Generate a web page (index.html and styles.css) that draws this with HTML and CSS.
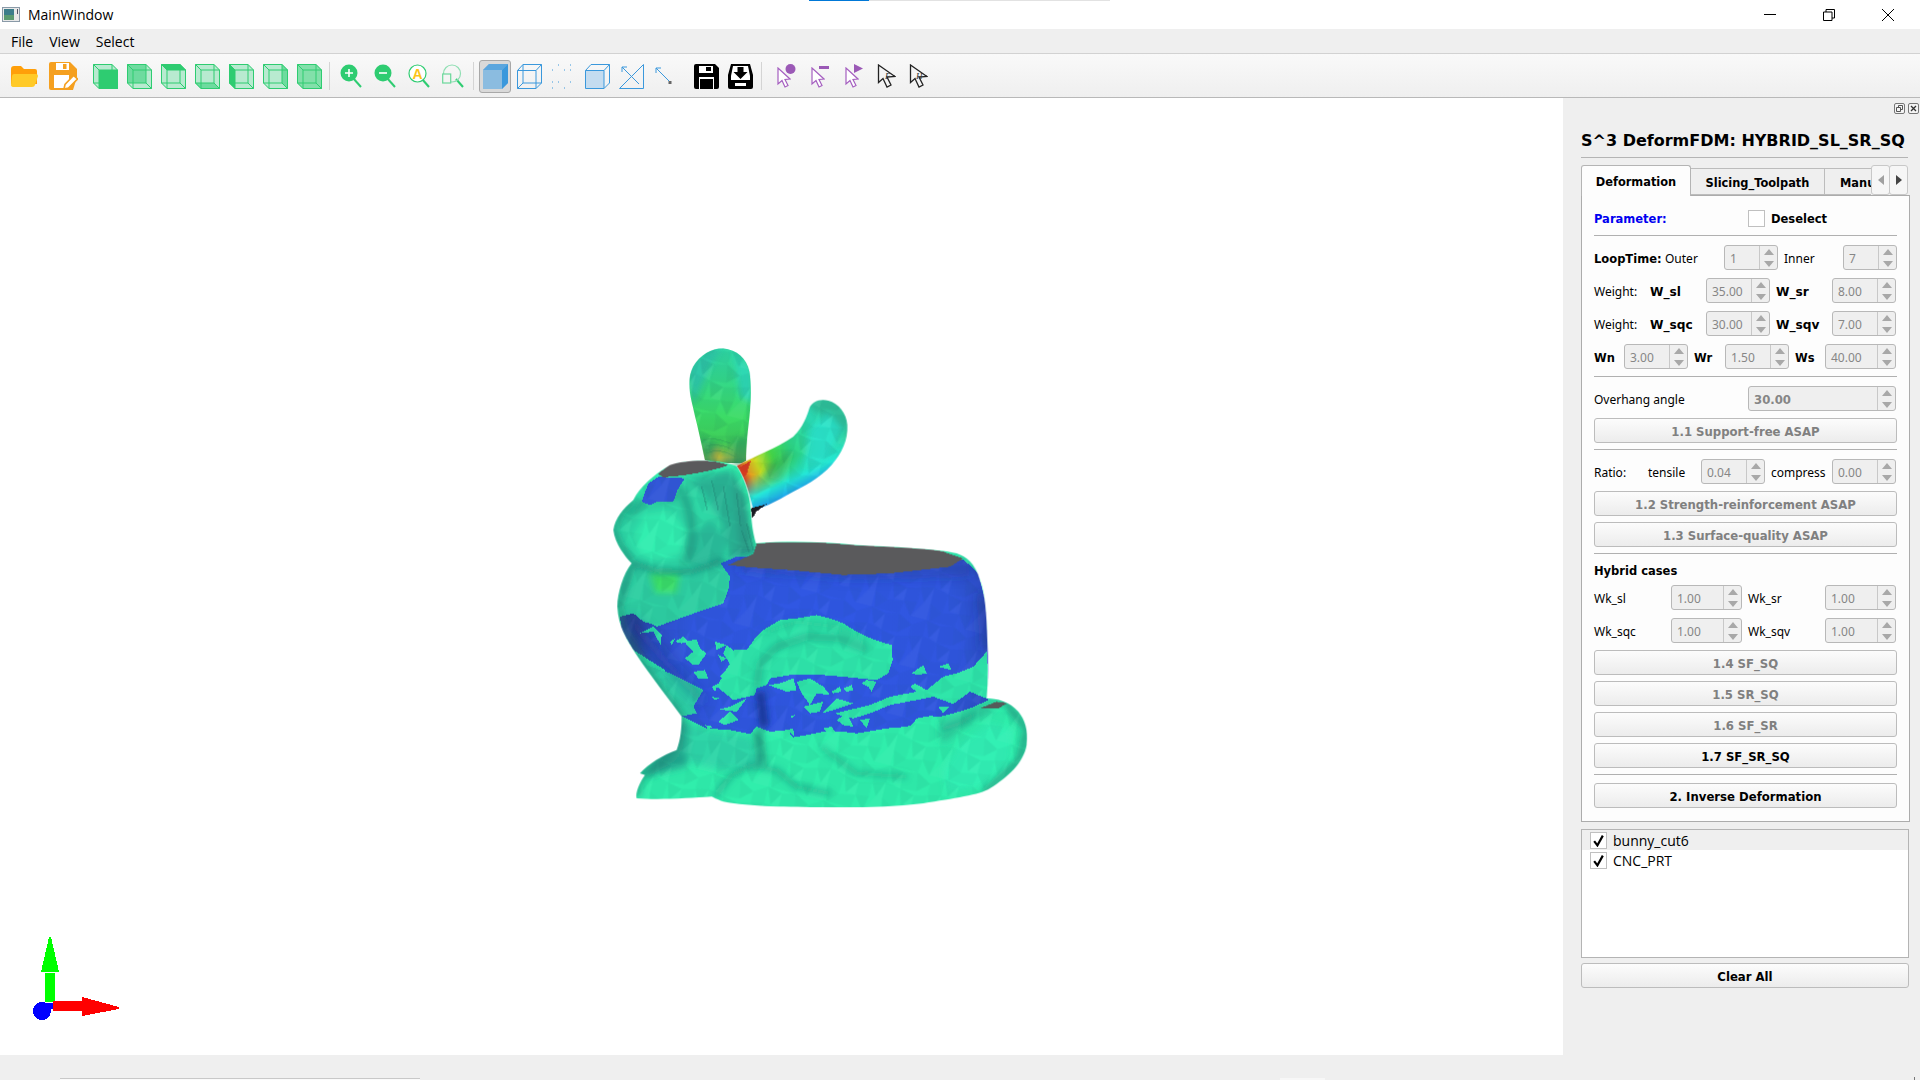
FILE: index.html
```html
<!DOCTYPE html>
<html lang="en">
<head>
<meta charset="utf-8">
<title>MainWindow</title>
<link rel="stylesheet" href="styles.css">
</head>
<body>
<svg class="defs" width="0" height="0">
  <defs>
    <symbol id="wire" viewBox="0 0 25 25"><path d="M.5.5H19V19H.5ZM6 6H24.5V24.5H6ZM.5.5 6 6M19 .5 24.5 6M19 19l5.5 5.5M.5 19 6 24.5" fill="none" stroke="#2ecc71" stroke-width="1"/></symbol>
    <symbol id="arrow-p" viewBox="0 0 14 21"><path d="M1 1V17L5 13.5 8 20 11 18.5 8 12.5 13 12Z" fill="#fff" stroke="#a55fc0" stroke-width="1.2"/></symbol>
    <symbol id="arrow-k" viewBox="0 0 19 24"><path d="M1.500 1V18.500L6 14.500 10 23 14 21 10 13 18 12.500Z" fill="#f4f4f4" stroke="#222" stroke-width="1.3"/></symbol>
    <symbol id="updown" viewBox="0 0 10 18"><path d="M5 0 10 6H0ZM0 12H10L5 18Z" fill="#a8a8a8"/></symbol>
    <linearGradient id="earL" x1="0" y1="0" x2="0" y2="1"><stop offset="0" stop-color="#2fd6a6"/><stop offset=".25" stop-color="#33d88e"/><stop offset=".6" stop-color="#3cdc66"/><stop offset=".82" stop-color="#40cc58"/><stop offset=".95" stop-color="#7aa848"/><stop offset="1" stop-color="#3f8a58"/></linearGradient>
    <linearGradient id="earR" gradientUnits="userSpaceOnUse" x1="450" y1="420" x2="750" y2="280"><stop offset="0" stop-color="#d8402a"/><stop offset=".07" stop-color="#e8a020"/><stop offset=".16" stop-color="#cfdc20"/><stop offset=".32" stop-color="#48dc48"/><stop offset=".5" stop-color="#30d884"/><stop offset=".78" stop-color="#2ee0b8"/><stop offset="1" stop-color="#2fcf9c"/></linearGradient>
    <linearGradient id="earB" gradientUnits="userSpaceOnUse" x1="590" y1="390" x2="640" y2="500"><stop offset="0" stop-color="#28e8c0" stop-opacity="0"/><stop offset=".5" stop-color="#25e8d8"/><stop offset=".8" stop-color="#20a8ee"/><stop offset="1" stop-color="#2050d0"/></linearGradient>
    <radialGradient id="blueG" gradientUnits="userSpaceOnUse" cx="700" cy="930" r="560"><stop offset="0" stop-color="#3058e6"/><stop offset=".72" stop-color="#3056de"/><stop offset=".92" stop-color="#2e4ec4"/><stop offset="1" stop-color="#2b4299"/></radialGradient>
    <filter id="soft" x="-10%" y="-10%" width="120%" height="120%"><feGaussianBlur stdDeviation="9"/></filter>
    <filter id="softer" x="-10%" y="-10%" width="120%" height="120%"><feGaussianBlur stdDeviation="20"/></filter>
    <pattern id="facets" width="170" height="150" patternUnits="userSpaceOnUse" patternTransform="rotate(14)">
      <path fill="#06444c" opacity=".10" d="M0 0 45 10 20 50ZM85 0 130 25 95 55ZM45 60 90 70 60 110ZM130 60 170 50 150 100ZM0 100 40 120 10 150ZM90 110 130 105 120 150Z"/>
      <path fill="#06444c" opacity=".05" d="M45 10 85 0 95 55 45 60ZM130 25 170 0 170 50 130 60ZM0 50 45 60 40 120 0 100ZM90 70 130 60 130 105 90 110ZM40 120 90 110 85 150 10 150Z"/>
      <path fill="#ffffff" opacity=".045" d="M20 50 45 10 45 60ZM60 110 90 70 90 110ZM150 100 170 50 170 150 120 150Z"/>
    </pattern>
    <clipPath id="bodyClip"><path d="M70 600C75 565 100 535 130 510 150 470 190 435 240 405 290 388 380 385 440 408 462 440 478 490 482 530 484 570 488 610 498 640 600 632 700 636 800 645 900 650 1040 655 1100 670 1130 680 1155 700 1170 750 1185 790 1190 850 1192 930 1195 990 1195 1050 1190 1105 1220 1105 1260 1115 1285 1145 1305 1170 1315 1200 1310 1245 1300 1300 1255 1340 1200 1375 1170 1395 1090 1405 1000 1420 900 1432 800 1434 700 1432 600 1432 480 1430 400 1415 380 1408 370 1402 365 1400 300 1405 200 1410 140 1405 135 1390 150 1355 165 1335L150 1330C175 1300 220 1275 260 1260 272 1230 275 1195 275 1160 240 1110 190 1050 140 975 110 930 85 890 82 830 82 790 100 730 125 700 105 680 75 640 70 600Z"/></clipPath>
    <clipPath id="earLClip"><path d="M345 390C335 340 320 280 305 215 295 170 295 140 310 110 330 75 365 55 400 55 440 60 470 85 478 125 485 170 483 230 475 290 470 330 468 365 468 392L440 408Z"/></clipPath>
    <clipPath id="earRClip"><path d="M440 408C490 380 560 355 610 320 640 290 650 260 658 235 665 215 690 205 715 212 745 220 770 250 772 285 775 330 755 370 725 405 690 445 640 470 600 490 565 510 530 530 490 540 480 500 465 440 440 408Z"/></clipPath>
  </defs>
</svg>
<div class="progress"><span class="progress-fill"></span></div>
<div class="window">
  <header class="titlebar">
    <svg class="app-icon" viewBox="0 0 18 15"><rect x=".5" y=".5" width="17" height="14" fill="#e8e8e8" stroke="#8a9aa8"/><rect x="2" y="2" width="10" height="11" fill="#3c7d8a"/><rect x="2" y="8" width="10" height="5" fill="#5a9a70"/><rect x="15" y="2" width="1" height="5" fill="#556"/></svg>
    <span class="title-text">MainWindow</span>
    <div class="win-controls">
      <svg class="win-btn" viewBox="0 0 12 12"><path d="M0 5.500H12" stroke="#000" fill="none"/></svg>
      <svg class="win-btn" viewBox="0 0 12 12"><path d="M.5 3H9V11.500H.5ZM3 3V.5H11.500V9H9" stroke="#000" fill="none"/></svg>
      <svg class="win-btn" viewBox="0 0 12 12"><path d="M0 0 12 12M12 0 0 12" stroke="#000" fill="none"/></svg>
    </div>
  </header>
  <nav class="menubar"><span>File</span><span>View</span><span>Select</span></nav>
  <div class="toolbar">
    <button class="tool"><svg width="27" height="21" viewBox="0 0 27 21"><path d="M0 3Q0 0 3 0H10L13 3H24Q26 3 26 5V18H0Z" fill="#ff9f0a"/><path d="M3 8H25Q27 8 27 10L24 19Q23.500 21 21 21H3Q0 21 0 19L1 10Q1 8 3 8Z" fill="#ffca28"/></svg></button>
    <button class="tool g-save"><svg width="29" height="29" viewBox="0 0 29 29"><path d="M2 0H21L28 7V15L24 28H2Q0 28 0 26V2Q0 0 2 0Z" fill="#f5a020"/><rect x="7" y="1" width="13" height="7" fill="#fff"/><rect x="14" y="2" width="3.500" height="5" fill="#f5a020"/><rect x="5" y="13" width="15" height="13" fill="#fff"/><path d="M15 27 16 22.500 24.500 13.500 28.500 17 19.500 26Z" fill="#fff" stroke="#f5a020" stroke-width="1.600"/></svg></button>
    <button class="tool g-cubes"><svg class="cube" viewBox="0 0 25 25"><path class="lt" d="M0 0H19L25 6V25H6L0 19Z"/><rect class="fl" x="6" y="6" width="19" height="19"/><use href="#wire"/></svg></button>
    <button class="tool"><svg class="cube" viewBox="0 0 25 25"><path class="lt" d="M0 0H19L25 6V25H6L0 19Z"/><rect class="md" x="0" y="0" width="19" height="19"/><rect class="md" x="6" y="6" width="13" height="13"/><use href="#wire"/></svg></button>
    <button class="tool"><svg class="cube" viewBox="0 0 25 25"><path class="lt" d="M0 0H19L25 6V25H6L0 19Z"/><path class="fl" d="M0 0H19L25 6H6Z"/><use href="#wire"/></svg></button>
    <button class="tool"><svg class="cube" viewBox="0 0 25 25"><path class="lt" d="M0 0H19L25 6V25H6L0 19Z"/><path class="md" d="M0 19H19L25 25H6Z"/><use href="#wire"/></svg></button>
    <button class="tool"><svg class="cube" viewBox="0 0 25 25"><path class="lt" d="M0 0H19L25 6V25H6L0 19Z"/><path class="fl" d="M0 0 6 6V25L0 19Z"/><use href="#wire"/></svg></button>
    <button class="tool"><svg class="cube" viewBox="0 0 25 25"><path class="lt" d="M0 0H19L25 6V25H6L0 19Z"/><path class="md" d="M19 0 25 6V25L19 19Z"/><use href="#wire"/></svg></button>
    <button class="tool"><svg class="cube" viewBox="0 0 25 25"><path class="md2" d="M0 0H19L25 6V25H6L0 19Z"/><use href="#wire"/></svg></button>
    <i class="sep"></i>
    <button class="tool"><svg class="mag" viewBox="0 0 22 24"><path d="M13 14 21 23" stroke="#2ecc71" stroke-width="2"/><circle cx="9" cy="9" r="8.500" fill="#2ecc71"/><path d="M5 9H13M9 5V13" stroke="#fff" stroke-width="1.600"/></svg></button>
    <button class="tool"><svg class="mag" viewBox="0 0 22 24"><path d="M13 14 21 23" stroke="#2ecc71" stroke-width="2"/><circle cx="9" cy="9" r="8.500" fill="#2ecc71"/><path d="M5 9H13" stroke="#fff" stroke-width="1.600"/></svg></button>
    <button class="tool"><svg class="mag" viewBox="0 0 22 24"><path d="M14 15 21 23" stroke="#2ecc71" stroke-width="2"/><circle cx="9.500" cy="9.500" r="8.500" fill="#fff" stroke="#2ecc71" stroke-width="1.200"/><text class="mag-a" x="9.500" y="14.500">A</text></svg></button>
    <button class="tool"><svg class="mag" viewBox="0 0 22 24"><path d="M14 15 21 23" stroke="#2ecc71" stroke-width="2"/><circle cx="10" cy="9.500" r="8.500" fill="none" stroke="#8fdfb3" stroke-width="1.200"/><rect x=".7" y="10" width="8" height="9" fill="#f4f4f4" stroke="#6ad89a" stroke-width="1.200"/></svg></button>
    <i class="sep sep2"></i>
    <button class="tool active"><svg width="25" height="25" viewBox="0 0 25 25"><path d="M0 6 6 0H25V19L19 25H0Z" fill="#8bbce0"/><path d="M0 6 6 0H25L19 6Z" fill="#5ba6de"/><path d="M19 6 25 0V19L19 25Z" fill="#3a98dc"/></svg></button>
    <button class="tool"><svg class="cube" viewBox="0 0 25 25"><path d="M.5 6.500H19V24.500H.5ZM6 .5H24.500V19H6ZM.5 6.500 6 .5M19 6.500 24.500 .5M19 24.500 24.500 19M.5 24.500 6 19" fill="none" stroke="#3a98dc"/></svg></button>
    <button class="tool"><svg class="cube" viewBox="0 0 25 25"><path d="M7 1h1M19 1h1M1 6h1M13 6h1M19 6h1M1 18h1M7 18h1M19 18h1M1 24h1M13 24h1" stroke="#3a98dc"/></svg></button>
    <button class="tool"><svg class="cube" viewBox="0 0 25 25"><path d="M.5 6.500H19V24.500H.5Z" fill="#c4dcf0"/><path d="M.5 6.500H19V24.500H.5ZM.5 6.500 6 .5H24.500V19L19 24.500M19 6.500 24.500 .5" fill="none" stroke="#3a98dc"/></svg></button>
    <button class="tool"><svg class="cube" viewBox="0 0 25 25"><path d="M.5 24.500H24.500V.5ZM3 3 20 20M3 3V8M3 3H8" fill="none" stroke="#3a98dc"/></svg></button>
    <button class="tool t-line"><svg width="17" height="18" viewBox="0 0 17 18"><path d="M1 1 15 15M1 1V6M1 1H6" fill="none" stroke="#3a98dc"/><rect x="13.500" y="14" width="3" height="3" fill="#666"/></svg></button>
    <button class="tool g-black"><svg width="25" height="25" viewBox="0 0 25 25"><path d="M2 0H21L25 4V23Q25 25 23 25H2Q0 25 0 23V2Q0 0 2 0Z" fill="#000"/><rect x="5" y="2" width="14" height="7" fill="#fff"/><rect x="12" y="3" width="5" height="4" fill="#000"/><rect x="5" y="13" width="15" height="12" fill="#fff"/><rect x="6" y="15" width="13" height="10" fill="#000"/></svg></button>
    <button class="tool"><svg width="25" height="25" viewBox="0 0 25 25"><path d="M3 0H22L25 11V23Q25 25 23 25H2Q0 25 0 23V11Z" fill="#000"/><path d="M5 2H20L22 12V16H3V12Z" fill="#fff"/><path d="M9.500 3H15.500V8H19.500L12.500 15 5.500 8H9.500Z" fill="#000"/><rect x="7" y="19" width="11" height="3" fill="#fff"/></svg></button>
    <i class="sep sep3"></i>
    <button class="tool"><svg width="19" height="24" viewBox="0 0 19 24"><use href="#arrow-p" x="0" y="3" width="14" height="21"/><circle cx="13.500" cy="5" r="5" fill="#9b59b6"/></svg></button>
    <button class="tool"><svg width="19" height="24" viewBox="0 0 19 24"><use href="#arrow-p" x="0" y="3" width="14" height="21"/><rect x="8" y="2" width="10" height="3" fill="#9b59b6"/></svg></button>
    <button class="tool"><svg width="19" height="24" viewBox="0 0 19 24"><use href="#arrow-p" x="0" y="3" width="14" height="21"/><path d="M9 0 18 4.500 9 9Z" fill="#9b59b6"/></svg></button>
    <button class="tool t-cur2 g-k"><svg width="19" height="24" viewBox="0 0 19 24"><use href="#arrow-k"/><text class="cur-t" x="8" y="15">F</text></svg></button>
    <button class="tool t-cur2"><svg width="19" height="24" viewBox="0 0 19 24"><use href="#arrow-k"/><text class="cur-t" x="7" y="15">H</text></svg></button>
  </div>
  <main class="main">
    <section class="viewport">
      <svg class="bunny" viewBox="0 0 1380 1470" shape-rendering="crispEdges">
        <!-- rear ear -->
        <g clip-path="url(#earLClip)">
          <rect x="280" y="50" width="210" height="350" fill="url(#earL)"/>
          <g filter="url(#soft)" shape-rendering="auto">
            <path fill="#2fc8a8" d="M290 100 400 40 360 110 310 220Z"/>
            <path fill="#2ed8b4" d="M430 60 490 120 490 220 450 200Z"/>
            <path fill="#2a9a60" opacity=".6" d="M335 400 330 320 380 340 400 400Z"/>
            <path fill="#d4c030" d="M368 385 385 355 405 400Z"/>
            <path fill="#30a060" opacity=".7" d="M430 330 480 310 480 400 430 410Z"/>
          </g>
          <path fill="none" stroke="#2a8850" stroke-width="2" opacity=".5" d="M340 330Q375 320 420 340M345 350Q380 335 430 360M350 370Q385 350 435 380"/>
          <rect x="280" y="50" width="210" height="350" fill="url(#facets)"/>
        </g>
        <!-- front ear -->
        <g clip-path="url(#earRClip)">
          <rect x="430" y="200" width="350" height="350" fill="url(#earR)"/>
          <rect x="430" y="200" width="350" height="350" fill="url(#earB)"/>
          <g filter="url(#soft)" shape-rendering="auto">
            <path fill="#2ae6d0" opacity=".8" d="M660 300 710 250 765 290 700 400 640 410Z"/>
            <path fill="#2fbe98" d="M650 225 690 200 745 215 785 270 785 330 750 290 720 250 680 245Z"/>
            <path fill="#279a5c" opacity=".5" d="M540 400 610 360 570 450 510 460Z"/>
          </g>
          <path fill="#d83a20" d="M448 412 482 392 470 432 462 442Z"/>
          <rect x="430" y="200" width="350" height="350" fill="url(#facets)"/>
        </g>
        <path fill="#1a1a22" d="M482 535 530 522 498 546 487 566Z"/>
        <!-- body -->
        <g clip-path="url(#bodyClip)">
          <rect width="1380" height="1470" fill="#30eeac"/>
          <g filter="url(#soft)" shape-rendering="auto">
            <!-- head -->
            <path fill="#2fd8a6" d="M60 600 160 470 300 430 430 420 500 660 400 710 300 730 200 730 120 700Z"/>
            <path fill="#31eeb0" d="M125 620 170 550 240 540 290 600 275 670 200 695 150 670Z"/>
            <path fill="#2ab494" d="M300 450 420 420 470 530 495 660 420 690 400 580 340 490Z"/>
            <path fill="#2a9f88" d="M430 430 465 500 490 640 500 670 450 680 440 560Z"/>
            <path fill="#2bbd9a" d="M300 620 360 570 410 620 400 700 300 720Z"/>
            <path fill="none" stroke="#1f8a78" stroke-width="26" opacity=".55" d="M270 470Q330 590 285 700"/>
            <path fill="none" stroke="#1f8a78" stroke-width="22" opacity=".4" d="M110 560 170 510 260 500"/>
            <!-- chest -->
            <path fill="#2fcfa2" d="M70 760 125 700 200 725 300 730 420 690 430 780 400 830 200 900 90 880Z"/>
            <path fill="#3ade68" d="M178 728 270 730 260 790 195 790Z"/>
            <!-- lower -->
            <path fill="#2fd6a8" d="M260 1170 360 1200 480 1220 520 1310 400 1320 260 1290Z"/>
            <path fill="#2ab898" d="M255 1170 300 1180 290 1310 170 1340 190 1290Z"/>
            <path fill="#2ed09e" d="M1050 1170 1190 1110 1240 1110 1200 1150 1120 1190 1080 1230 1050 1240Z"/>
            <path fill="#33f0b4" d="M1110 1240 1200 1180 1270 1200 1260 1300 1180 1370 1070 1390 1060 1320Z"/>
          </g>
          <!-- blue -->
          <path fill="url(#blueG)" d="M392 700 440 680 1120 688 1165 730 1188 820 1196 960 1196 1110 1140 1135 1090 1150 1050 1160 1020 1158 980 1165 965 1185 950 1190 890 1195 800 1210 760 1205 700 1205 650 1215 610 1222 590 1200 540 1205 500 1190 480 1212 420 1200 350 1195 275 1158 225 1020 130 960 95 900 90 860 130 850 160 875 180 880 200 890 340 840 400 820 415 780 420 740Z"/>
          <path fill="#3257d8" d="M155 515 175 460 205 440 285 445 262 480 250 515 200 515 180 525Z"/>
          <!-- left flank -->
          <path fill="#2fd6a8" d="M120 950 170 1005 240 1030 300 1060 340 1080 310 1130 320 1150 270 1160 200 1060 130 960Z"/>
          <!-- thigh -->
          <path fill="#2fe6aa" d="M470 960 495 925 520 900 570 870 620 865 680 855 720 865 760 880 800 905 830 920 870 935 905 945 908 990 895 1030 860 1050 760 1040 700 1035 600 1035 540 1045 530 1065 500 1075 495 1095 430 1110 380 1070 420 1000 432 960Z"/>
          <!-- teal flecks -->
          <path fill="#2fe6aa" d="M150 910 190 890 215 915 212 945 190 905ZM240 935 255 925 245 945ZM255 935 280 920 295 935 275 940ZM285 935 320 928 330 955 350 970 325 1005 310 1005 285 985 310 965 290 945ZM310 1025 345 1020 355 1045 325 1045ZM375 935 410 945 380 960ZM410 945 432 962 440 1000 420 1002 400 970ZM385 975 410 985 395 995ZM390 1040 420 1005 425 1030 395 1045ZM365 1070 385 1060 375 1085ZM405 1075 435 1045 440 1070 415 1085ZM365 1100 390 1105 375 1110ZM380 1140 420 1130 470 1105 440 1145 400 1140ZM385 1175 420 1145 445 1170 405 1185ZM345 1185 370 1190 355 1198ZM535 1065 570 1060 610 1045 620 1080 590 1085ZM620 1055 660 1045 700 1070 720 1095 680 1090 660 1125 635 1090ZM725 1085 750 1070 755 1085 730 1090ZM760 1075 785 1065 790 1080 770 1085ZM815 1060 830 1050 860 1055 845 1085 835 1070ZM640 1130 700 1115 690 1145 660 1150ZM695 1150 740 1105 790 1120 730 1140ZM735 1150 840 1125 900 1100 980 1085 960 1070 975 1060 1010 1080 1060 1040 1100 1030 1150 1010 1190 965 1200 1110 1140 1085 1090 1122 1030 1100 980 1110 900 1125 840 1150 790 1165 760 1160ZM965 1030 1000 1005 1010 1030 985 1035ZM1045 1010 1075 1000 1085 1020ZM700 1195 725 1190 735 1205 710 1205ZM740 1170 770 1150 790 1190 760 1185ZM810 1170 840 1165 830 1195ZM590 1200 610 1195 612 1218ZM600 1160 615 1155 605 1165ZM1045 1130 1080 1130 1060 1150Z"/>
          <!-- shading on top -->
          <g filter="url(#soft)" fill="none" shape-rendering="auto">
            <path stroke="#1c6a68" stroke-width="16" opacity=".5" d="M130 700 200 722 300 726 400 692"/>
            <path stroke="#1a7a70" stroke-width="24" opacity=".32" d="M500 1070 510 1000 560 950 650 920 750 925 830 960"/>
            <path stroke="#1a8070" stroke-width="20" opacity=".18" d="M520 910 620 875 740 890 830 930"/>
            <path stroke="#142c80" stroke-width="26" opacity=".75" d="M510 1085 522 1190"/>
            <path stroke="#1a6a68" stroke-width="24" opacity=".6" d="M505 1200 515 1300"/>
            <path stroke="#1c7a70" stroke-width="14" opacity=".5" d="M375 1400 420 1340 480 1305 560 1320 620 1370 720 1390"/>
            <path stroke="#1c7a70" stroke-width="16" opacity=".35" d="M690 1250 800 1330 950 1340"/>
            <path stroke="#1c7a70" stroke-width="14" opacity=".4" d="M1050 1200 1110 1180 1160 1150"/>
            <path stroke="#1c7a70" stroke-width="20" opacity=".55" d="M130 510 90 550 70 600 85 640 125 700 85 830 100 900 200 1060 275 1160 260 1260 150 1330 140 1400"/>
            <path stroke="#1c6a68" stroke-width="18" opacity=".55" d="M1240 1110 1312 1200 1290 1290 1180 1390"/>
            <path stroke="#1a7a70" stroke-width="12" opacity=".5" d="M160 1340 230 1300 285 1285"/>
          </g>
          <g filter="url(#softer)" fill="none" shape-rendering="auto">
            <path stroke="#1d2f80" stroke-width="26" opacity=".7" d="M1185 790 1196 960"/>
            <path stroke="#1d2f80" stroke-width="26" opacity=".5" d="M440 700 800 725 1150 715"/>
            <path stroke="#1d2f80" stroke-width="26" opacity=".4" d="M120 870 240 1010 340 1120"/>
          </g>
          <!-- facets -->
          <rect class="facet-layer" width="1380" height="1470" fill="url(#facets)"/>
          <path fill="none" stroke="#1f7c70" stroke-width="3" opacity=".55" d="M335 470 352 540M365 450 385 540M400 470 420 590M440 490 452 590M455 600 478 668M470 580 490 660"/>
          <!-- caps -->
          <path fill="#5a5a5c" d="M205 432 240 400C290 388 360 385 415 405 390 416 350 425 280 436L220 442Z"/>
          <path fill="#5a5a5c" d="M415 705 490 672 500 640C600 632 700 636 800 645 900 650 1040 655 1060 665L1120 685 1080 710 900 730 760 735 600 720 480 712Z"/>
          <path fill="#565a5a" d="M1170 1135 1220 1115 1252 1120 1225 1135Z"/>
        </g>
      </svg>
      <svg class="axes" viewBox="0 0 95 100" shape-rendering="crispEdges">
        <path fill="#0f0" d="M15 45H25V74H15ZM19 9H21L29 44H11Z"/>
        <path fill="#f00" d="M23 73H52V83H23ZM52 69 89 79V81L52 88Z"/>
        <circle cx="12" cy="83" r="9" fill="#00f"/>
        <path fill="#00f" d="M15 75H23V81H15Z"/>
      </svg>
    </section>
    <aside class="dock">
      <div class="dock-btns">
        <svg class="dock-btn" viewBox="0 0 11 11"><rect x=".5" y=".5" width="10" height="10" rx="1.500" fill="#f4f4f4" stroke="#777"/><path d="M2.500 4.500h4v4h-4zM4.500 4.500v-2h4v4h-2" fill="none" stroke="#555"/></svg>
        <svg class="dock-btn" viewBox="0 0 11 11"><rect x=".5" y=".5" width="10" height="10" rx="1.500" fill="#f4f4f4" stroke="#777"/><path d="M3 3 8 8M8 3 3 8" fill="none" stroke="#333" stroke-width="1.300"/></svg>
      </div>
      <h1 class="dock-title">S^3 DeformFDM: HYBRID_SL_SR_SQ</h1>
      <div class="tabbar">
        <div class="tab-strip">
          <span class="tab tab-on">Deformation</span>
          <span class="tab tab-2">Slicing_Toolpath</span>
          <span class="tab tab-3">Manu</span>
        </div>
        <div class="tab-scroll"><svg viewBox="0 0 6 10"><path d="M6 0V10L0 5Z" fill="#a0a0a0"/></svg></div>
        <div class="tab-scroll tab-scroll-2"><svg viewBox="0 0 6 10"><path d="M0 0V10L6 5Z" fill="#444"/></svg></div>
      </div>
      <div class="pane">
        <div class="row row-param">
          <b class="blue w-param">Parameter:</b>
          <span class="check"></span><b class="lbl-desel">Deselect</b>
        </div>
        <hr class="line m8">
        <div class="row m9">
          <b class="w-loop">LoopTime:</b><span class="w-outer">Outer</span>
          <div class="spin s-54"><span>1</span><svg viewBox="0 0 10 18"><use href="#updown"/></svg></div>
          <span class="w-inner">Inner</span>
          <div class="spin s-54"><span>7</span><svg viewBox="0 0 10 18"><use href="#updown"/></svg></div>
        </div>
        <div class="row m8">
          <span class="w-weight">Weight:</span><b class="w-wname">W_sl</b>
          <div class="spin s-64"><span>35.00</span><svg viewBox="0 0 10 18"><use href="#updown"/></svg></div>
          <b class="w-wname2">W_sr</b>
          <div class="spin s-64"><span>8.00</span><svg viewBox="0 0 10 18"><use href="#updown"/></svg></div>
        </div>
        <div class="row m8">
          <span class="w-weight">Weight:</span><b class="w-wname">W_sqc</b>
          <div class="spin s-64"><span>30.00</span><svg viewBox="0 0 10 18"><use href="#updown"/></svg></div>
          <b class="w-wname2">W_sqv</b>
          <div class="spin s-64"><span>7.00</span><svg viewBox="0 0 10 18"><use href="#updown"/></svg></div>
        </div>
        <div class="row m8">
          <b class="w-wn">Wn</b>
          <div class="spin s-64"><span>3.00</span><svg viewBox="0 0 10 18"><use href="#updown"/></svg></div>
          <b class="w-wr">Wr</b>
          <div class="spin s-64"><span>1.50</span><svg viewBox="0 0 10 18"><use href="#updown"/></svg></div>
          <b class="w-ws">Ws</b>
          <div class="spin s-71"><span>40.00</span><svg viewBox="0 0 10 18"><use href="#updown"/></svg></div>
        </div>
        <hr class="line m7">
        <div class="row m9">
          <span class="w-over">Overhang angle</span>
          <div class="spin s-148 spin-b"><span>30.00</span><svg viewBox="0 0 10 18"><use href="#updown"/></svg></div>
        </div>
        <button class="btn off m7">1.1 Support-free ASAP</button>
        <hr class="line m6">
        <div class="row m9">
          <span class="w-ratio">Ratio:</span><span class="w-tens">tensile</span>
          <div class="spin s-64"><span>0.04</span><svg viewBox="0 0 10 18"><use href="#updown"/></svg></div>
          <span class="w-comp">compress</span>
          <div class="spin s-64"><span>0.00</span><svg viewBox="0 0 10 18"><use href="#updown"/></svg></div>
        </div>
        <button class="btn off m7">1.2 Strength-reinforcement ASAP</button>
        <button class="btn off m6">1.3 Surface-quality ASAP</button>
        <hr class="line m6">
        <b class="hybrid">Hybrid cases</b>
        <div class="row m7">
          <span class="w-wk">Wk_sl</span>
          <div class="spin s-71"><span>1.00</span><svg viewBox="0 0 10 18"><use href="#updown"/></svg></div>
          <span class="w-wk2">Wk_sr</span>
          <div class="spin s-71"><span>1.00</span><svg viewBox="0 0 10 18"><use href="#updown"/></svg></div>
        </div>
        <div class="row m8">
          <span class="w-wk">Wk_sqc</span>
          <div class="spin s-71"><span>1.00</span><svg viewBox="0 0 10 18"><use href="#updown"/></svg></div>
          <span class="w-wk2">Wk_sqv</span>
          <div class="spin s-71"><span>1.00</span><svg viewBox="0 0 10 18"><use href="#updown"/></svg></div>
        </div>
        <button class="btn off m7">1.4 SF_SQ</button>
        <button class="btn off m6">1.5 SR_SQ</button>
        <button class="btn off m6">1.6 SF_SR</button>
        <button class="btn m6">1.7 SF_SR_SQ</button>
        <hr class="line m6">
        <button class="btn m8">2. Inverse Deformation</button>
      </div>
      <ul class="list">
        <li class="item item-on"><span class="check"><svg viewBox="0 0 12 12"><path d="M2 6.500 5 10.500 10 1.500" fill="none" stroke="#000" stroke-width="2"/></svg></span>bunny_cut6</li>
        <li class="item"><span class="check"><svg viewBox="0 0 12 12"><path d="M2 6.500 5 10.500 10 1.500" fill="none" stroke="#000" stroke-width="2"/></svg></span>CNC_PRT</li>
      </ul>
      <button class="btn clear">Clear All</button>
    </aside>
  </main>
  <footer class="statusbar"><i class="strip-a"></i><i class="strip-b"></i><i class="strip-c"></i></footer>
</div>
</body>
</html>
```

FILE: styles.css
```css
* { box-sizing: border-box; }
html, body { margin: 0; padding: 0; }
body { background: #efefef; font-family: "Noto Sans", sans-serif; font-size: 12px; color: #000; overflow: hidden; }
b { font-family: "DejaVu Sans", sans-serif; font-weight: 700; font-size: 11.5px; }
.defs { position: absolute; }
.progress { position: absolute; left: 809px; top: 0; width: 301px; height: 1px; background: #e2e2e2; }
.progress-fill { display: block; width: 60px; height: 1px; background: #0078d7; }
.window { display: flex; flex-direction: column; width: 1920px; height: 1080px; }

.titlebar { display: flex; align-items: center; height: 29px; background: #fff; padding-left: 2px; flex: none; }
.app-icon { width: 18px; height: 15px; margin-right: 8px; }
.title-text { font-family: "Open Sans", sans-serif; font-size: 14px; }
.win-controls { margin-left: auto; display: flex; padding-right: 26px; gap: 47px; }
.win-btn { width: 12px; height: 12px; display: block; }

.menubar { display: flex; height: 25px; background: #efefef; border-bottom: 1px solid #d2d2d2; align-items: center; padding-left: 11px; gap: 16px; font-family: "Open Sans", sans-serif; font-size: 14px; flex: none; }

.toolbar { display: flex; align-items: center; height: 44px; padding: 1px 0 0 7px; background: linear-gradient(#f9f9f9, #efefef); border-bottom: 1px solid #b8b8b8; flex: none; }
.tool { width: 34px; height: 33px; padding: 0; border: 1px solid transparent; background: none; display: flex; align-items: center; justify-content: center; flex: none; }
.tool svg { display: block; flex: none; }
.tool.active { background: #d9d9d9; border-color: #a8a8a8; border-radius: 3px; width: 32px; margin: 0 1px; }
.g-save { margin-left: 5px; }
.g-cubes { margin-left: 8px; }
.g-black { margin-left: 11px; }
.g-k { margin-left: -1px; }
.t-line { width: 30px; }
.cube { width: 25px; height: 25px; }
.cube .lt { fill: #b8ead0; }
.cube .fl { fill: #2ecc71; }
.cube .md { fill: #6edb9f; }
.cube .md2 { fill: #82e0aa; }
.mag { width: 22px; height: 24px; }
.mag-a { font-family: "Liberation Sans", sans-serif; font-weight: 700; font-size: 14px; fill: #fcc419; text-anchor: middle; }
.cur-t { font-family: "Liberation Serif", serif; font-style: italic; font-size: 9px; fill: #333; }
.sep { width: 1px; height: 28px; background: #d4d4d4; margin: 0 4px 0 3px; flex: none; }
.sep2 { margin: 0 4px 0 3px; }
.sep3 { margin: 0 7px 0 4px; }
.t-cur2 { width: 32px; }

.main { flex: 1; display: flex; min-height: 0; }
.viewport { position: relative; width: 1563px; background: #fff; flex: none; }
.bunny { position: absolute; left: 590px; top: 232px; width: 460px; height: 490px; }
.facet-layer { opacity: .7; }
.axes { position: absolute; left: 30px; top: 830px; width: 95px; height: 100px; }

.dock { position: relative; flex: 1; padding: 0 11px 0 18px; display: flex; flex-direction: column; background: #efefef; }
.dock-btns { position: absolute; top: 5px; right: 2px; display: flex; gap: 3px; }
.dock-btn { width: 11px; height: 11px; display: block; }
.dock-title { margin: 30px 0 0; height: 30px; font-family: "DejaVu Sans", sans-serif; font-size: 16px; font-weight: 700; line-height: 25px; border-bottom: 1px solid #b4b4b4; white-space: nowrap; width: 327px; }

.tabbar { display: flex; margin-top: 7px; height: 31px; position: relative; z-index: 1; margin-bottom: -1px; align-items: flex-start; }
.tab-strip { display: flex; width: 290px; height: 31px; align-items: flex-start; }
.tab { display: flex; align-items: center; justify-content: center; padding-top: 2px; font-family: "DejaVu Sans", sans-serif; font-weight: 700; font-size: 11.4px; flex: none; white-space: nowrap; }
.tab-on { width: 110px; height: 31px; background: #fdfdfd; border: 1px solid #b4b4b4; border-bottom: 0; border-radius: 3px 3px 0 0; }
.tab-2 { width: 134px; height: 27px; margin-top: 3px; background: #efefef; border: 1px solid #bcbcbc; border-left: 0; }
.tab-3 { width: 46px; height: 27px; margin-top: 3px; background: #efefef; border-top: 1px solid #bcbcbc; border-bottom: 1px solid #bcbcbc; justify-content: flex-start; padding-left: 15px; }
.tab-scroll { position: relative; width: 19px; height: 30px; background: #f6f6f6; border: 1px solid #c8c8c8; border-radius: 3px; display: flex; align-items: center; justify-content: center; flex: none; }
.tab-scroll-2 { margin-left: -1px; }
.tab-scroll svg { width: 6px; height: 10px; }

.pane { display: flex; flex-direction: column; height: 627px; background: #fdfdfd; border: 1px solid #acacac; padding: 14px 12px 0; flex: none; }
.row { display: flex; align-items: center; height: 25px; flex: none; white-space: nowrap; }
.row > span:not(.check), .row > b { padding-top: 2px; }
.row-param { height: 17px; }
.row-param > b { padding-top: 0; }
.m6 { margin-top: 6px; }
.m7 { margin-top: 7px; }
.m8 { margin-top: 8px; }
.m9 { margin-top: 9px; }
.line { border: 0; height: 1px; background: #b0b0b0; width: 100%; margin-bottom: 0; margin-left: 0; margin-right: 0; flex: none; }
.blue { color: #0000f0; }
.w-param { width: 154px; }
.check { width: 17px; height: 17px; background: #fff; border: 1px solid #c0c0c0; display: flex; align-items: center; justify-content: center; flex: none; }
.check svg { width: 13px; height: 13px; }
.lbl-desel { margin-left: 6px; }
.w-loop { width: 71px; }
.w-outer { width: 59px; }
.w-inner { width: 59px; margin-left: 6px; }
.w-weight { width: 56px; }
.w-wname, .w-wname2 { font-size: 12.2px; width: 56px; }
.w-wname2 { margin-left: 6px; }
.w-wn { width: 30px; }
.w-wr { width: 31px; margin-left: 6px; }
.w-ws { width: 30px; margin-left: 6px; }
.w-over { width: 154px; }
.w-ratio { width: 54px; }
.w-tens { width: 53px; }
.w-comp { width: 61px; margin-left: 6px; }
.w-wk { width: 77px; }
.w-wk2 { width: 77px; margin-left: 6px; }

.spin { display: flex; align-items: center; height: 25px; background: #efefef; border: 1px solid #b8b8b8; border-radius: 3px; color: #868686; flex: none; padding-left: 5px; position: relative; }
.spin span { flex: 1; padding-top: 2px; }
.spin::after { content: ""; position: absolute; right: 17px; top: 0; bottom: 0; width: 1px; background: #c8c8c8; }
.spin svg { width: 10px; height: 18px; margin-right: 3px; flex: none; }
.spin-b { font-family: "DejaVu Sans", sans-serif; font-weight: 700; font-size: 11.7px; }
.s-54 { width: 54px; }
.s-64 { width: 64px; }
.s-71 { width: 71px; }
.s-148 { width: 148px; }

.btn { display: block; width: 100%; height: 25px; flex: none; padding: 2px 0 0; font: 700 11.7px "DejaVu Sans", sans-serif; color: #000; background: linear-gradient(#fcfcfc, #ececec); border: 1px solid #bcbcbc; border-radius: 3px; }
.btn.off { color: #808080; }
.hybrid { display: block; height: 16px; line-height: 16px; margin-top: 8px; padding-top: 1px; flex: none; }

.list { list-style: none; margin: 7px 0 0; padding: 0; height: 129px; width: 328px; background: #fff; border: 1px solid #b4b4b4; flex: none; }
.item { display: flex; align-items: center; height: 20px; padding-left: 8px; gap: 6px; font-family: "Open Sans", sans-serif; font-size: 14px; }
.item-on { background: #efefef; }
.clear { width: 328px; margin-top: 5px; }

.statusbar { position: relative; display: flex; align-items: flex-end; height: 25px; background: #efefef; flex: none; }
.strip-a { display: block; width: 360px; height: 2px; margin-left: 60px; background: #fafafa; border-top: 1px solid #c8c8c8; }
.strip-b { display: block; width: 45px; height: 2px; margin-left: 860px; background: #f7f7f7; }
.strip-c { display: block; width: 1px; height: 3px; margin-left: 589px; background: #777; }
```
